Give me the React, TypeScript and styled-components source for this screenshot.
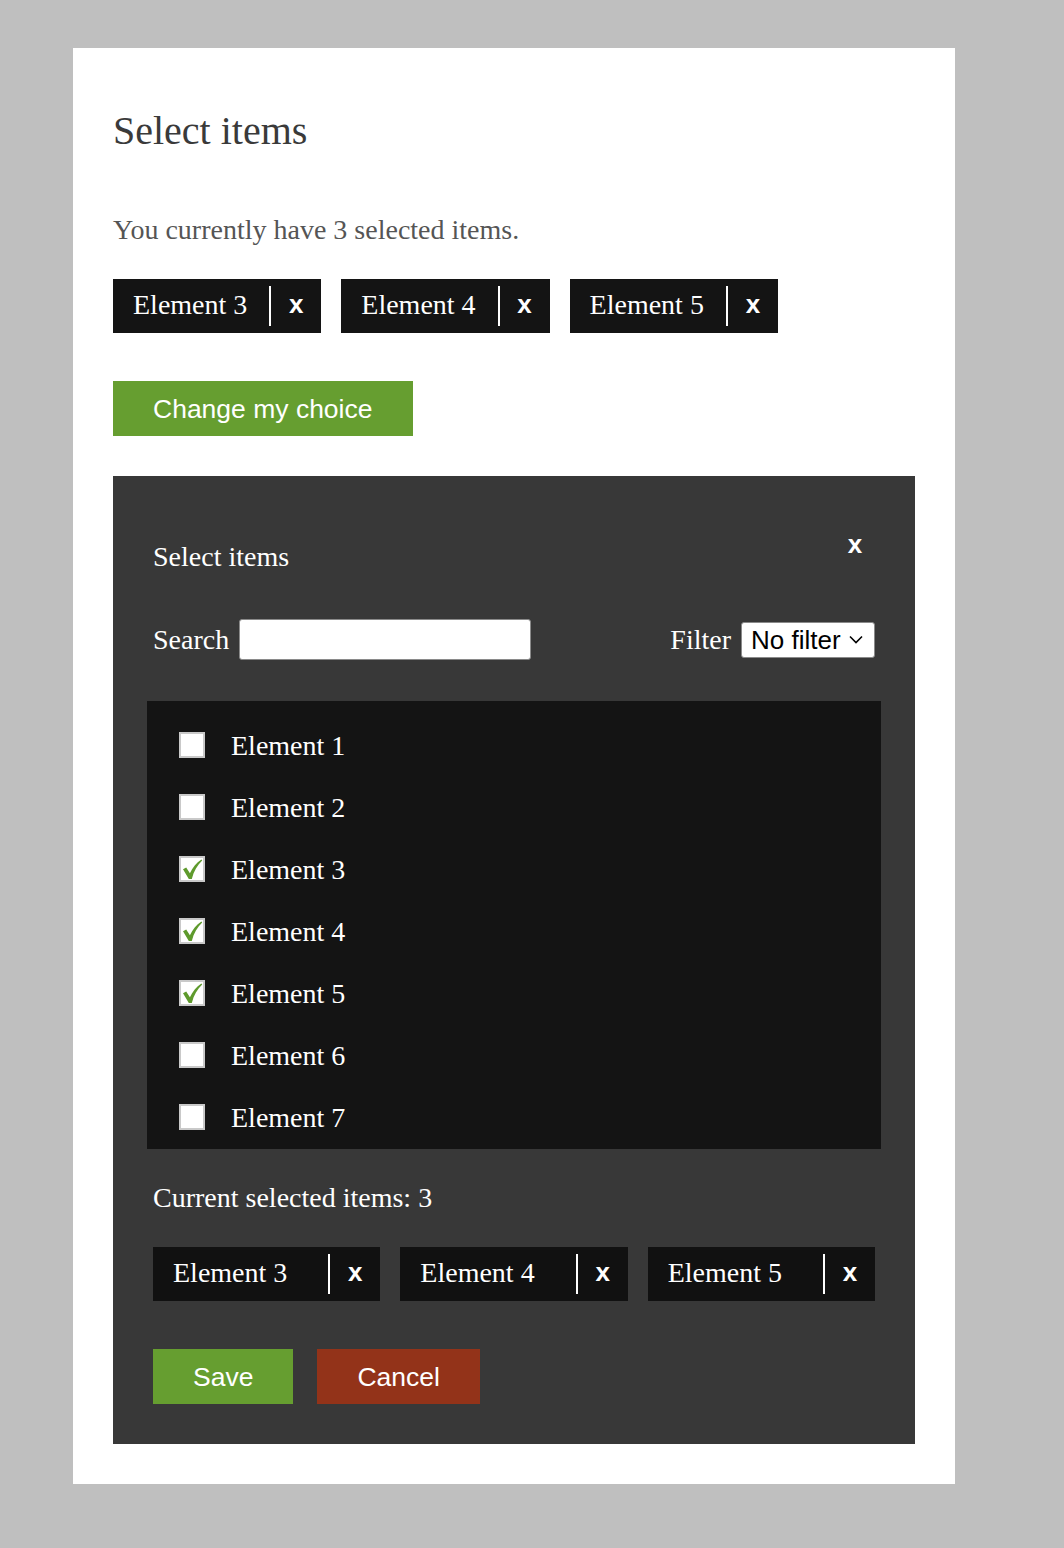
import { FC } from "react";
import styled, { createGlobalStyle } from "styled-components";

// Fonts
const SERIF = `"Liberation Serif", "Times New Roman", serif`;
const SANS = `"Liberation Sans", Arial, sans-serif`;

// Colours
const GREEN = "#669e30";
const RED = "#933319";

const GlobalStyle = createGlobalStyle`
  html, body {
    margin: 0;
    padding: 0;
    background: #bfbfbf;
  }
  body {
    font-family: ${SERIF};
  }
  * {
    box-sizing: border-box;
  }
`;

// Styled Components
const StyledPage = styled.div`
  padding: 48px 0 64px 73px;
`;

const StyledCard = styled.div`
  width: 882px;
  background: #fff;
  padding: 40px;
`;

const StyledTitle = styled.h1`
  margin: 20px 0 0;
  font-family: ${SERIF};
  font-weight: normal;
  font-size: 40px;
  line-height: 46px;
  color: #3a3a3a;
`;

const StyledSummary = styled.p`
  margin: 60px 0 0;
  font-size: 28px;
  line-height: 32px;
  color: #555;
`;

const StyledChipRow = styled.div`
  display: flex;
  gap: 20px;
  margin-top: 33px;
`;

const StyledChip = styled.div<{ $stretch?: boolean }>`
  display: flex;
  align-items: center;
  height: 54px;
  background: ${({ $stretch }) => ($stretch ? "#111" : "#141414")};
  flex: ${({ $stretch }) => ($stretch ? "1 1 0" : "0 0 auto")};
`;

const StyledChipLabel = styled.span`
  flex: 1;
  padding: 0 22px 3px 20px;
  font-family: ${SERIF};
  font-size: 28px;
  line-height: 32px;
  color: #fff;
  white-space: nowrap;
`;

const StyledChipDivider = styled.span`
  width: 2px;
  height: 40px;
  background: #fff;
`;

const StyledChipRemove = styled.button`
  width: 50px;
  padding: 0 0 4px;
  border: 0;
  background: transparent;
  font-family: ${SANS};
  font-weight: bold;
  font-size: 26px;
  line-height: 30px;
  color: #fff;
  cursor: pointer;
`;

const StyledButton = styled.button<{ $color: string }>`
  height: 55px;
  padding: 0 40px;
  border: 0;
  background: ${({ $color }) => $color};
  font-family: ${SANS};
  font-size: 26.5px;
  line-height: 30px;
  color: #fff;
  cursor: pointer;
`;

const StyledChangeButton = styled(StyledButton)`
  width: 300px;
  margin-top: 48px;
  text-align: left;
`;

const StyledModal = styled.section`
  margin-top: 40px;
  background: #383838;
  padding: 40px;
  color: #fff;
`;

const StyledModalHeader = styled.div`
  display: flex;
  justify-content: space-between;
  align-items: flex-start;
  margin-top: 13px;
`;

const StyledModalTitle = styled.h2`
  margin: 12px 0 0;
  font-family: ${SERIF};
  font-weight: normal;
  font-size: 28px;
  line-height: 32px;
`;

const StyledClose = styled.button`
  width: 26px;
  margin-right: 7px;
  padding: 0;
  border: 0;
  background: transparent;
  font-family: ${SANS};
  font-weight: bold;
  font-size: 26px;
  line-height: 30px;
  color: #fff;
  text-align: center;
  cursor: pointer;
`;

const StyledToolbar = styled.div`
  display: flex;
  justify-content: space-between;
  align-items: center;
  margin-top: 46px;
  height: 41px;
`;

const StyledField = styled.label`
  display: flex;
  align-items: center;
  gap: 10px;
  font-size: 28px;
  line-height: 32px;
`;

const StyledSearchInput = styled.input`
  width: 292px;
  height: 41px;
  border: 1px solid #8a8a8a;
  border-radius: 3px;
  background: #fff;
  font-family: ${SANS};
  font-size: 22px;
  padding: 0 8px;
`;

const StyledSelect = styled.div`
  display: flex;
  align-items: center;
  gap: 8px;
  width: 134px;
  height: 36px;
  padding: 0 8px 0 9px;
  border: 1px solid #8a8a8a;
  border-radius: 3px;
  background: #fff;
  font-family: ${SANS};
  font-size: 26px;
  line-height: 30px;
  color: #000;
`;

const StyledList = styled.ul`
  list-style: none;
  margin: 41px -6px 0;
  padding: 14px 0 0 32px;
  background: #141414;
`;

const StyledListItem = styled.li`
  display: flex;
  align-items: center;
  gap: 26px;
  height: 62px;
  font-size: 28px;
  line-height: 32px;
`;

const StyledCheckbox = styled.span`
  position: relative;
  width: 26px;
  height: 26px;
  margin-top: -2px;
  border: 2px solid #c9c9c9;
  background: #fff;
  flex: 0 0 auto;
`;

const StyledTick = styled.svg`
  position: absolute;
  left: 0;
  top: 0;
`;

const StyledCount = styled.p`
  margin: 33px 0 0;
  font-size: 28px;
  line-height: 32px;
`;

const StyledActions = styled.div`
  display: flex;
  gap: 24px;
  margin-top: 48px;
`;

// Data
const ITEMS = [1, 2, 3, 4, 5, 6, 7].map((n) => ({ id: n, label: `Element ${n}` }));
const SELECTED = [3, 4, 5];

const Chip: FC<{ label: string; stretch?: boolean }> = ({ label, stretch }) => (
  <StyledChip $stretch={stretch}>
    <StyledChipLabel>{label}</StyledChipLabel>
    <StyledChipDivider />
    <StyledChipRemove>x</StyledChipRemove>
  </StyledChip>
);

const Checkbox: FC<{ checked: boolean }> = ({ checked }) => (
  <StyledCheckbox>
    {checked && (
      <StyledTick width="22" height="22" viewBox="0 0 22 22">
        <path
          d="M2 11.2 L5.2 9.4 L8.9 15.2 C11.6 9.4 15.2 4.8 20.4 1.4 L21.2 2.6 C16.4 7 12.8 13.2 10.8 21 L7.8 21 Z"
          fill="#5e9a2c"
        />
      </StyledTick>
    )}
  </StyledCheckbox>
);

const App: FC = () => {
  const selected = ITEMS.filter((item) => SELECTED.includes(item.id));

  return (
    <StyledPage>
      <GlobalStyle />
      <StyledCard>
        <StyledTitle>Select items</StyledTitle>
        <StyledSummary>You currently have {selected.length} selected items.</StyledSummary>
        <StyledChipRow>
          {selected.map((item) => (
            <Chip key={item.id} label={item.label} />
          ))}
        </StyledChipRow>
        <StyledChangeButton $color={GREEN}>Change my choice</StyledChangeButton>

        <StyledModal>
          <StyledModalHeader>
            <StyledModalTitle>Select items</StyledModalTitle>
            <StyledClose>x</StyledClose>
          </StyledModalHeader>

          <StyledToolbar>
            <StyledField>
              Search
              <StyledSearchInput type="text" />
            </StyledField>
            <StyledField>
              Filter
              <StyledSelect>
                No filter
                <svg width="14" height="9" viewBox="0 0 14 9">
                  <path d="M1 1.5 L7 7.5 L13 1.5" fill="none" stroke="#000" strokeWidth="1.6" />
                </svg>
              </StyledSelect>
            </StyledField>
          </StyledToolbar>

          <StyledList>
            {ITEMS.map((item) => (
              <StyledListItem key={item.id}>
                <Checkbox checked={SELECTED.includes(item.id)} />
                {item.label}
              </StyledListItem>
            ))}
          </StyledList>

          <StyledCount>Current selected items: {selected.length}</StyledCount>
          <StyledChipRow>
            {selected.map((item) => (
              <Chip key={item.id} label={item.label} stretch />
            ))}
          </StyledChipRow>

          <StyledActions>
            <StyledButton $color={GREEN}>Save</StyledButton>
            <StyledButton $color={RED}>Cancel</StyledButton>
          </StyledActions>
        </StyledModal>
      </StyledCard>
    </StyledPage>
  );
};

export default App;
